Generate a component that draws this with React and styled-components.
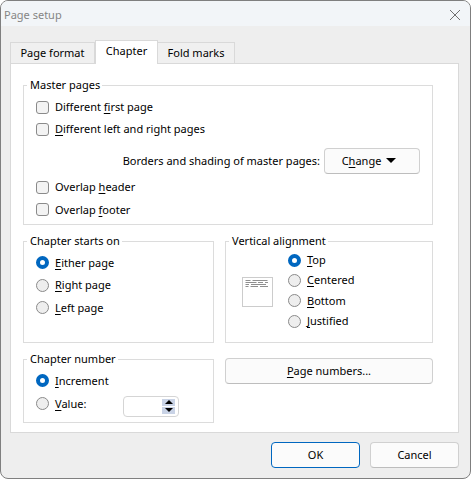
import React from "react";
import styled, { createGlobalStyle } from "styled-components";

const Global = createGlobalStyle`
  html, body { margin: 0; padding: 0; background: #fff; }
  * { box-sizing: border-box; }
  body { font: 11px/16px "Noto Sans", "Open Sans", sans-serif; color: #000; }
`;
const Win = styled.div`
  width: 471px; height: 479px; background: #eeeeee;
  border: 1px solid #7f7f7f; border-radius: 8px; overflow: hidden;
  display: flex; flex-direction: column;
`;
const TitleBar = styled.div`
  height: 25px; flex: none; background: #f2f5f8; color: #858585;
  display: flex; align-items: center; justify-content: space-between;
  padding: 2px 10px 0 3px;
`;
const CloseIcon = styled.svg`
  width: 10px; height: 10px; stroke: #707070; stroke-width: 1; fill: none;
`;
const Content = styled.div`
  flex: 1; display: flex; flex-direction: column; padding: 16px 11px 10px 9px;
`;
const TabStrip = styled.div`
  display: flex; height: 21px; align-items: flex-end; position: relative; z-index: 1;
`;
const Tab = styled.div`
  height: ${p => (p.$active ? "24px" : "22px")};
  width: ${p => p.$w}px;
  margin-bottom: -1px;
  background: ${p => (p.$active ? "#fff" : "#f0f0f0")};
  border: 1px solid #d9d9d9;
  border-left-width: ${p => (p.$active || p.$first ? "1px" : "0")};
  border-bottom: ${p => (p.$active ? "none" : "1px solid #d9d9d9")};
  display: flex; align-items: center; justify-content: center;
  padding-bottom: ${p => (p.$active ? "3px" : "0")};
`;
const Panel = styled.div`
  height: 370px; background: #fff; border: 1px solid #d9d9d9;
  padding: 13px 25px 0 12px; display: flex; flex-direction: column;
`;
const Group = styled.fieldset`
  margin: 0; min-width: 0; border: 1px solid #dcdcdc; padding: 0 0 0 12px;
  height: ${p => p.$h}px;
  & > legend { padding: 0 2px 0 3px; margin-left: -9px; line-height: 16px; height: 16px; }
`;
const TwoCols = styled.div`
  display: grid; grid-template-columns: 191px 208px; column-gap: 11px; margin-top: ${p => p.$mt}px;
`;
const Row = styled.label`
  display: flex; align-items: center; gap: 6px; height: ${p => p.$h || 22}px;
`;
const Box = styled.span`
  width: 13px; height: 13px; flex: none; background: #f3f3f3; border: 1px solid #8a8a8a; border-radius: 3px;
`;
const Radio = styled.span`
  width: 13px; height: 13px; flex: none; border-radius: 50%;
  ${p => p.$on
    ? "background: #fff; border: 4px solid #0067c0;"
    : "background: #eeeeee; border: 1px solid #8a8a8a;"}
`;
const U = styled.span` text-decoration: underline; text-underline-offset: 2px; `;
const ChangeRow = styled.div`
  display: flex; justify-content: flex-end; align-items: center; gap: 4px;
  padding-right: 12px; margin: 8px 0 2px; height: 26px;
`;
const Btn = styled.div`
  width: ${p => (p.$w ? p.$w + "px" : "auto")}; height: 26px; flex: none;
  background: #fbfbfb; border: 1px solid ${p => (p.$primary ? "#0067c0" : "#d0d0d0")};
  border-bottom-color: ${p => (p.$primary ? "#0067c0" : "#bdbdbd")};
  border-radius: 4px;
  padding-right: ${p => p.$pr || 0}px;
  display: flex; align-items: center; justify-content: center; gap: 5px;
`;
const Caret = styled.span`
  width: 0; height: 0; border-left: 5px solid transparent; border-right: 5px solid transparent;
  border-top: 5px solid #000; margin-top: -1px;
`;
const List = styled.div`
  padding-top: ${p => p.$pt}px; display: flex; flex-direction: column;
`;
const VAlign = styled.div`
  display: flex; gap: 15px; padding: 0 0 0 4px; align-items: flex-start;
`;
const PagePreview = styled.div`
  width: 31px; height: 30px; border: 1px solid #ccc; margin-top: 28px; flex: none; background: #fff;
`;
const PageSvg = styled.svg` display: block; width: 29px; height: 28px; `;
const SpinField = styled.div`
  width: 56px; height: 21px; margin-left: 31px; margin-top: 5px; border: 1px solid #d5d5d5; border-radius: 4px; background: #fff;
  display: flex; justify-content: flex-end; align-items: center; padding-right: 3px;
`;
const SpinBtns = styled.div`
  width: 13px; display: flex; flex-direction: column; gap: 1px;
`;
const SpinBtn = styled.div`
  height: 7px; background: #c9d3e6; display: flex; align-items: center; justify-content: center;
  &::before {
    content: ""; width: 0; height: 0; border-left: 4px solid transparent; border-right: 4px solid transparent;
    ${p => (p.$up ? "border-bottom: 4px solid #000;" : "border-top: 4px solid #000;")}
  }
`;
const Side = styled.div` padding-top: 7px; `;
const Footer = styled.div`
  display: flex; justify-content: flex-end; gap: 10px; margin-top: 9px;
`;

export default function App() {
  return (
    <>
      <Global />
      <Win>
        <TitleBar>
          <span>Page setup</span>
          <CloseIcon viewBox="0 0 10 10"><path d="M0 0L10 10M10 0L0 10" /></CloseIcon>
        </TitleBar>
        <Content>
          <TabStrip>
            <Tab $first $w={85}>Page format</Tab>
            <Tab $active $w={63}>Chapter</Tab>
            <Tab $w={77}>Fold marks</Tab>
          </TabStrip>
          <Panel>
            <Group $h={148}>
              <legend>Master pages</legend>
              <List $pt={3}>
                <Row><Box /><span>Different <U>f</U>irst page</span></Row>
                <Row><Box /><span><U>D</U>ifferent left and right pages</span></Row>
              </List>
              <ChangeRow>
                <span>Borders and shading of master pages:</span>
                <Btn $w={96} $pr={6}><span>C<U>h</U>ange</span><Caret /></Btn>
              </ChangeRow>
              <Row><Box /><span>Overlap <U>h</U>eader</span></Row>
              <Row $h={23}><Box /><span>Overlap <U>f</U>ooter</span></Row>
            </Group>
            <TwoCols $mt={8}>
              <Group $h={110}>
                <legend>Chapter starts on</legend>
                <List $pt={2}>
                  <Row $h={23}><Radio $on /><span><U>E</U>ither page</span></Row>
                  <Row $h={22}><Radio /><span><U>R</U>ight page</span></Row>
                  <Row $h={23}><Radio /><span><U>L</U>eft page</span></Row>
                </List>
              </Group>
              <Group $h={110}>
                <legend>Vertical alignment</legend>
                <VAlign>
                  <PagePreview>
                    <PageSvg viewBox="0 0 29 28">
                      <g stroke="#8f8f8f" strokeWidth="1">
                        <path d="M2.5 2.5H7.5M9.5 2.5H24.5M2.5 4.5H13.5M15 4.5H20M22 4.5H25M2.5 6.5H6M8 6.5H23M2.5 8.5H5.5M7.5 8.5H15M17 8.5H25" />
                      </g>
                    </PageSvg>
                  </PagePreview>
                  <List $pt={1}>
                    <Row $h={20}><Radio $on /><span><U>T</U>op</span></Row>
                    <Row $h={20}><Radio /><span><U>C</U>entered</span></Row>
                    <Row $h={21}><Radio /><span><U>B</U>ottom</span></Row>
                    <Row $h={20}><Radio /><span><U>J</U>ustified</span></Row>
                  </List>
                </VAlign>
              </Group>
            </TwoCols>
            <TwoCols $mt={8}>
              <Group $h={72}>
                <legend>Chapter number</legend>
                <List $pt={2}>
                  <Row $h={23}><Radio $on /><span><U>I</U>ncrement</span></Row>
                  <Row $h={23}>
                    <Radio /><span><U>V</U>alue:</span>
                    <SpinField><SpinBtns><SpinBtn $up /><SpinBtn /></SpinBtns></SpinField>
                  </Row>
                </List>
              </Group>
              <Side><Btn><span><U>P</U>age numbers...</span></Btn></Side>
            </TwoCols>
          </Panel>
          <Footer>
            <Btn $w={89} $primary>OK</Btn>
            <Btn $w={89}>Cancel</Btn>
          </Footer>
        </Content>
      </Win>
    </>
  );
}
